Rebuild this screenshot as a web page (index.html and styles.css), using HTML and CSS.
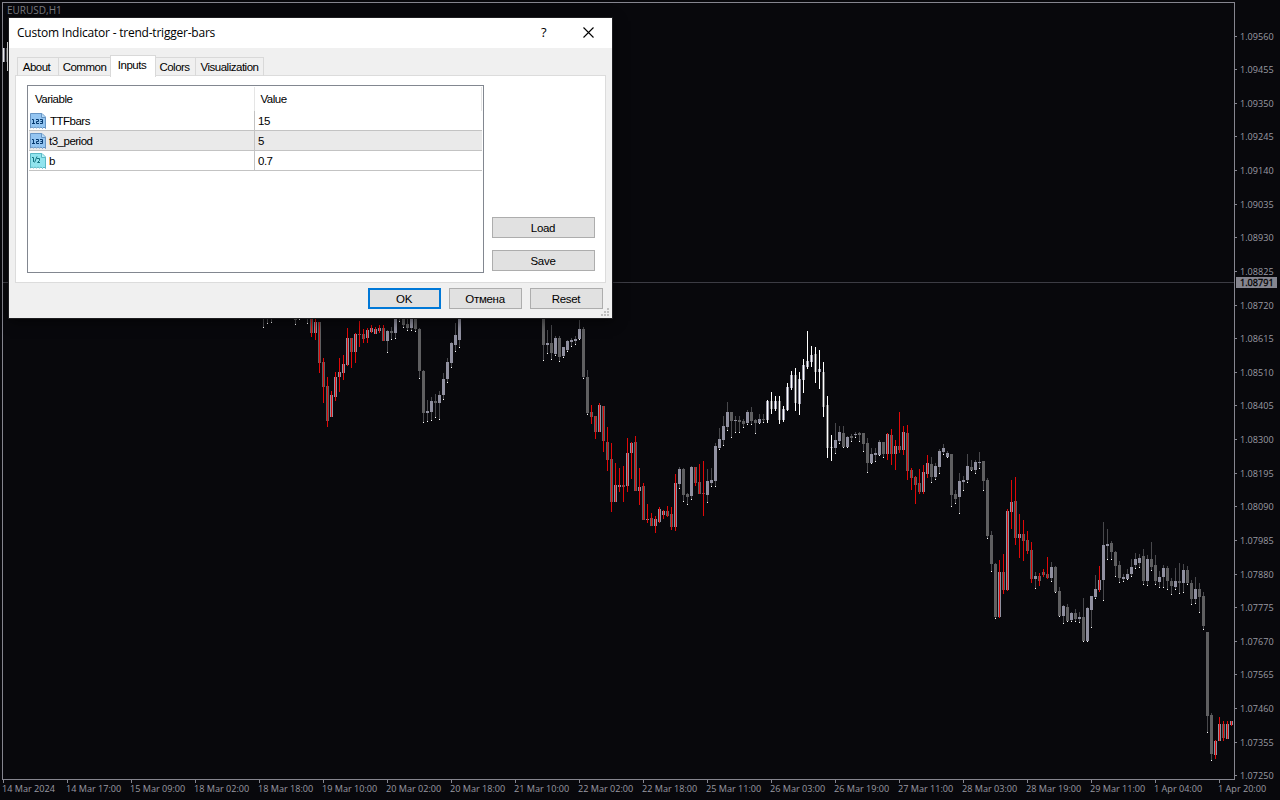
FILE: index.html
```html
<!DOCTYPE html>
<html lang="en">
<head>
<meta charset="UTF-8" />
<meta name="viewport" content="width=device-width, initial-scale=1" />
<title>EURUSD,H1</title>
<link rel="stylesheet" href="styles.css">
</head>
<body>
  <svg id="chart" class="chart" width="1280" height="800" viewBox="0 0 1280 800" shape-rendering="crispEdges">
    <path class="price-line" d="M3 282.5H1234" />
    <g id="candles"></g>
    <path class="frame" d="M2.5 780V2.5H1234.5V779.5H2" />
    <text class="symbol" x="7" y="14">EURUSD,H1</text>
    <g id="axes"></g>
    <rect class="price-box" x="1236" y="277" width="41" height="11" />
    <text class="price-now" x="1240" y="286">1.08791</text>
  </svg>

  <div class="dialog">
    <div class="title-bar">
      <span class="title">Custom Indicator - trend-trigger-bars</span>
      <span class="help">?</span>
      <svg class="close" width="11" height="11" viewBox="0 0 11 11"><path d="M.5 .5l10 10M10.500 .5l-10 10" /></svg>
    </div>

    <div class="tabs">
      <div class="tab about">About</div>
      <div class="tab common">Common</div>
      <div class="tab active">Inputs</div>
      <div class="tab colors">Colors</div>
      <div class="tab visual">Visualization</div>
    </div>

    <div class="panel">
      <div class="list">
        <div class="list-head"><span>Variable</span><span>Value</span></div>
        <div class="row">
          <div class="name first">
            <svg class="icon blue" width="16" height="16" viewBox="0 0 16 16"><path class="sheet" d="M.5 .5H12L15.500 4V15.500L14 14L12.500 15.500L11 14L9.500 15L8 14L6.500 15L5 14L3.500 15L2 14L.5 15Z" /><path class="fold" d="M11.500 .5V4.500H15.500" /><path class="mark" d="M2 6.500H3.500V10.500M2 10.500H5M6 6.500H8.500V8.500H6.500V10.500H9M10 6.500H12.500V10.500H10M10.500 8.500H12.500" /></svg>
            <span>TTFbars</span>
          </div>
          <div class="value">15</div>
        </div>
        <div class="row selected">
          <div class="name">
            <svg class="icon blue" width="16" height="16" viewBox="0 0 16 16"><path class="sheet" d="M.5 .5H12L15.500 4V15.500L14 14L12.500 15.500L11 14L9.500 15L8 14L6.500 15L5 14L3.500 15L2 14L.5 15Z" /><path class="fold" d="M11.500 .5V4.500H15.500" /><path class="mark" d="M2 6.500H3.500V10.500M2 10.500H5M6 6.500H8.500V8.500H6.500V10.500H9M10 6.500H12.500V10.500H10M10.500 8.500H12.500" /></svg>
            <span>t3_period</span>
          </div>
          <div class="value">5</div>
        </div>
        <div class="row">
          <div class="name">
            <svg class="icon cyan" width="16" height="16" viewBox="0 0 16 16"><path class="sheet" d="M.5 .5H12L15.500 4V15.500L14 14L12.500 15.500L11 14L9.500 15L8 14L6.500 15L5 14L3.500 15L2 14L.5 15Z" /><path class="fold" d="M11.500 .5V4.500H15.500" /><path class="mark" d="M2 4.500H3.500V9M4.500 9.500L7 3.500M7 5.500H9.500V7.500L7.500 9.500H10" /></svg>
            <span>b</span>
          </div>
          <div class="value">0.7</div>
        </div>
      </div>
      <div class="side">
        <button>Load</button>
        <button>Save</button>
      </div>
    </div>

    <div class="footer">
      <button class="ok">OK</button>
      <button>Отмена</button>
      <button>Reset</button>
    </div>
    <svg class="grip" width="8" height="8" viewBox="0 0 8 8"><path d="M6 0h2v2H6zM3 3h2v2H3zM6 3h2v2H6zM0 6h2v2H0zM3 6h2v2H3zM6 6h2v2H6z" /></svg>
  </div>

<script src="chart.js"></script>
</body>
</html>
```

FILE: styles.css
```css
body {
  margin: 0;
  background-color: #08080c;
  overflow: hidden;
  font-family: "Open Sans", "Noto Sans", sans-serif;
}
.chart {
  display: block;
  font-size: 9.1px;
}
.chart text {
  fill: #9a9aa3;
}
.frame, .tick {
  fill: none;
  stroke: #85858f;
}
.price-line {
  stroke: #3c3c44;
}
.price-box {
  fill: #85858f;
}
.chart .price-now {
  fill: #000;
  stroke: #000;
  stroke-width: 0.3;
}
.chart .symbol {
  font-size: 10px;
  fill: #7c7c82;
}
.up { fill: #9090a0; }
.down { fill: #5f5f61; }
.wick-g { fill: #48484c; }
.wick-r { fill: #e00808; }
.wick-w, .dot { fill: #fff; }

/* dialog */
.dialog {
  position: absolute;
  left: 9px;
  top: 18px;
  width: 603px;
  height: 300px;
  background-color: #f0f0f0;
  box-shadow: 0 0 0 1px #1d1d20, 1px 3px 12px rgba(0, 0, 0, 0.6);
  font-family: "Liberation Sans", Arial, sans-serif;
  font-size: 11.5px;
  letter-spacing: -0.5px;
  color: #000;
}
.title-bar {
  height: 30px;
  background-color: #fff;
  display: flex;
  align-items: center;
  padding: 0 18px 2px 8px;
  box-sizing: border-box;
  font-family: "Open Sans", "Noto Sans", sans-serif;
}
.title {
  flex: 1;
  font-size: 12px;
  letter-spacing: -0.22px;
}
.help {
  font-size: 13px;
  font-weight: 500;
  margin-right: 37px;
}
.close path {
  fill: none;
  stroke: #000;
  stroke-width: 1.1;
}
.tabs {
  display: flex;
  align-items: flex-end;
  height: 28px;
  padding-left: 8px;
}
.tab {
  box-sizing: border-box;
  height: 19px;
  line-height: 19px;
  border: 1px solid #d9d9d9;
  border-bottom: none;
  text-align: center;
  white-space: nowrap;
}
.about { width: 41px; border-right: none; padding-right: 3px; }
.common { width: 52px; border-right: none; }
.colors { width: 39px; border-left: none; border-right: none; padding-right: 2px; }
.visual { width: 69px; }
.tab.active {
  width: 46px;
  height: 22px;
  background-color: #fff;
  margin-bottom: -1px;
  position: relative;
  padding-right: 2px;
}
.panel {
  box-sizing: border-box;
  width: 591px;
  height: 208px;
  margin: -1px 0 0 6px;
  border: 1px solid #dcdcdc;
  background-color: #fff;
  display: flex;
  padding: 9px 10px 9px 11px;
}
.list {
  box-sizing: border-box;
  width: 457px;
  height: 188px;
  border: 1px solid #828790;
  padding: 1px;
}
.list-head {
  display: flex;
  height: 24px;
  line-height: 25px;
}
.list-head span {
  box-sizing: border-box;
  width: 226px;
  padding-left: 6px;
  border-right: 1px solid #e5e5e5;
}
.list-head span + span {
  width: 228px;
}
.row {
  display: flex;
  height: 19px;
  line-height: 20px;
  border-bottom: 1px solid #c3c3c3;
}
.row.selected {
  background-color: #eaeaea;
}
.name {
  box-sizing: border-box;
  width: 226px;
  border-right: 1px solid #c3c3c3;
  display: flex;
  align-items: center;
  gap: 3px;
  padding-left: 1px;
}
.name.first {
  gap: 4px;
}
.value {
  padding-left: 3px;
}
.icon path {
  stroke-width: 1;
}
.blue .sheet { fill: #94c5f1; stroke: #6795c4; }
.blue .fold { fill: #b5daf8; stroke: #6795c4; }
.blue .mark { fill: none; stroke: #073b70; }
.cyan .sheet { fill: #91e4ee; stroke: #5bb8c5; }
.cyan .fold { fill: #bcf3f7; stroke: #5bb8c5; }
.cyan .mark { fill: none; stroke: #147381; }
.side {
  display: flex;
  flex-direction: column;
  justify-content: flex-end;
  gap: 12px;
  padding: 0 0 2px 8px;
}
button {
  box-sizing: border-box;
  width: 73px;
  height: 21px;
  padding: 1px 1px 0 0;
  border: 1px solid #adadad;
  background-color: #e1e1e1;
  color: #000;
  font: inherit;
  letter-spacing: -0.3px;
  line-height: 18px;
}
.side button {
  width: 103px;
}
button.ok {
  border: 2px solid #0078d7;
  line-height: 16px;
}
.footer {
  display: flex;
  justify-content: flex-end;
  gap: 8px;
  padding: 5px 9px 0 0;
}
.grip {
  position: absolute;
  right: 3px;
  bottom: 2px;
  fill: #bfbfbf;
}
```

FILE: chart.js
```javascript
const ns = 'http://www.w3.org/2000/svg';

// body direction + wick colour, body top, body bottom, high, low (y pixels)
// an empty entry is a bar hidden behind the dialog
const bars = `ug 300 319 300 328;ug 300 310 300 324;ug 300 310 300 323;;;;;;dg 300 320 300 325;ug 300 319 300 320;;ug 300 310 300 324;
dr 310 333 310 337;ur 322 333 318 340;dr 322 363 322 373;dr 362 387 358 403;dr 386 421 377 427;ur 395 417 391 417;ur 377 397 372 401;
ur 372 377 358 392;ur 364 373 355 380;ur 338 365 328 366;dr 338 352 338 368;ur 334 352 333 363;dr 334 335 321 347;dr 334 339 329 343;
ur 330 338 328 343;ur 328 332 325 333;ur 329 334 327 334;ur 328 331 325 333;dr 328 341 325 341;ug 331 341 330 353;dg 331 333 327 340;
ug 310 333 310 339;ug 310 319 310 322;dg 310 325 310 328;dg 324 328 319 331;ug 310 328 310 331;dg 310 329 310 332;dg 329 371 328 379;
dg 371 413 370 423;ug 411 413 400 422;ug 401 412 397 421;dg 401 403 394 418;ug 395 403 391 420;ug 379 395 373 400;ug 362 379 358 383;
ug 343 363 342 368;ug 335 345 323 352;ug 310 340 310 348;;;;;;;;;;;;;;;;;;;;;dg 310 345 310 361;ug 343 345 330 354;
dg 343 353 325 360;ug 338 354 336 356;dg 338 357 336 362;ug 347 356 347 358;ug 341 350 340 352;ug 340 342 338 347;ug 339 341 336 345;
ug 329 339 320 340;dg 329 377 327 379;dg 377 413 370 415;dr 412 417 405 424;dr 416 432 416 439;ur 405 432 403 432;dr 406 441 406 452;
dr 442 460 427 471;dr 459 502 443 512;ur 485 502 463 502;ur 485 487 468 492;dr 485 487 466 502;ur 453 486 438 492;ur 443 453 442 479;
dr 442 491 436 491;ur 487 491 468 505;dr 486 520 483 520;ur 519 520 504 523;dr 518 526 513 526;ur 519 526 516 533;ur 509 522 507 523;
ur 511 515 510 519;dr 511 516 506 517;dr 514 527 507 530;ur 483 527 474 531;ug 469 484 467 489;dg 469 495 468 502;dg 494 497 493 505;
ug 467 496 466 500;dr 467 483 467 486;dr 482 494 464 494;dr 493 494 461 516;ug 481 495 469 503;ug 480 483 468 487;ug 446 481 443 487;
ug 439 448 428 450;ug 426 440 416 446;ug 412 427 402 431;dg 412 421 412 438;ug 420 421 416 433;dg 420 422 416 433;dg 421 424 419 428;
ug 412 423 410 425;dg 412 421 407 425;dg 420 423 419 434;ug 419 423 414 424;dg 419 420 414 423;uw 401 420 400 423;dw 401 409 392 414;
uw 401 409 396 411;dw 401 420 396 424;uw 409 420 406 422;uw 387 410 383 411;uw 375 388 371 390;dw 375 403 368 411;uw 379 404 372 415;
uw 365 380 359 393;uw 361 367 331 369;uw 355 362 346 367;dw 354 372 347 383;uw 369 372 350 389;dw 372 407 362 417;dw 405 448 396 458;
dw 447 448 435 461;ug 440 448 423 454;ug 432 441 426 444;dg 433 447 426 448;ug 437 447 436 448;dg 436 438 434 442;ug 434 435 432 438;
dg 433 435 432 442;dg 433 444 433 452;dg 443 463 438 473;ug 454 463 448 464;ug 453 455 448 462;ug 442 455 440 456;dg 442 454 442 458;
ur 434 454 433 460;dr 435 454 429 465;ur 446 454 440 470;dr 446 450 412 453;ur 432 450 426 455;dr 433 471 425 480;dr 470 478 468 490;
dr 477 485 476 504;dr 483 492 469 494;ur 472 492 465 494;ur 463 474 455 478;dg 464 477 457 483;ug 466 477 463 480;ug 451 467 449 474;
ug 448 452 444 455;ug 453 457 451 458;dg 454 495 454 507;dg 494 499 490 504;ug 481 497 473 514;ug 480 482 476 491;ug 466 480 454 483;
dg 467 470 460 471;ug 462 470 460 474;ug 462 463 452 469;dg 461 481 461 491;dg 480 536 478 539;dg 535 564 531 572;dg 564 617 563 619;
ur 572 617 560 618;dr 572 590 554 594;ur 511 590 509 591;ur 502 512 480 529;dr 501 538 477 545;ur 534 538 514 558;dr 534 541 520 561;
dr 540 551 531 554;dr 550 579 542 583;ug 576 579 572 589;dr 576 581 573 586;dr 572 575 569 577;dr 574 578 557 579;ug 567 578 562 582;
dg 567 592 566 593;dg 591 616 587 617;ug 606 616 605 624;dg 607 621 604 622;ug 613 620 612 622;dg 613 619 609 622;ug 617 619 612 623;
dg 617 641 598 642;ug 608 641 607 642;ug 596 610 596 628;ug 589 597 575 599;ur 580 590 566 592;ug 545 580 522 601;ug 544 546 529 560;
dg 543 552 541 560;dg 552 566 551 577;dg 565 578 561 583;ug 577 579 574 582;ug 574 579 569 580;ug 567 574 559 577;ug 559 565 553 569;
ug 558 563 554 568;dg 556 581 549 585;ug 559 581 555 586;dg 559 567 542 571;dg 565 581 555 585;ug 577 582 571 588;ug 568 577 565 588;
dg 568 581 566 590;dg 581 586 578 595;ug 581 587 568 590;dg 581 583 563 594;ug 570 583 564 593;dg 570 583 566 585;dg 583 599 580 605;
ug 589 599 577 604;dg 589 597 583 613;dg 596 626 592 630;dg 632 716 632 733;dg 715 754 713 761;ur 741 755 740 759;ur 724 741 717 741;
dr 724 738 721 741;ur 724 739 721 739;ur 721 725 721 726`.replace(/\n/g, '').split(';');

const candles = document.getElementById('candles');
const axes = document.getElementById('axes');

function rect(x, y, w, h, cls) {
  const el = document.createElementNS(ns, 'rect');
  el.setAttribute('x', x);
  el.setAttribute('y', y);
  el.setAttribute('width', w);
  el.setAttribute('height', h);
  el.setAttribute('class', cls);
  candles.appendChild(el);
}

function tick(d) {
  const el = document.createElementNS(ns, 'path');
  el.setAttribute('d', d);
  el.setAttribute('class', 'tick');
  axes.appendChild(el);
}

function label(x, y, text) {
  const el = document.createElementNS(ns, 'text');
  el.setAttribute('x', x);
  el.setAttribute('y', y);
  el.textContent = text;
  axes.appendChild(el);
}

bars.forEach((bar, i) => {
  if (!bar) return;
  const [type, ...v] = bar.split(' ');
  const [top, bottom, high, low] = v.map(Number);
  const x = 263 + i * 4;
  const body = () => rect(x - 1, top, 3, bottom - top, type[0] === 'u' ? 'up' : 'down');
  const wick = () => rect(x, high, 1, low - high, 'wick-' + type[1]);
  if (type[1] === 'g') {
    wick();
    body();
    rect(x, low - 1, 1, 1, 'dot');
  } else {
    body();
    wick();
  }
});

// bars at the left edge, partly under the dialog
rect(3, 48, 2, 14, 'up');
rect(3, 48, 1, 14, 'wick-w');
rect(6, 48, 3, 14, 'down');
rect(7, 42, 1, 29, 'wick-w');

// price axis
for (let i = 0; i < 23; i++) {
  const y = Math.floor(36 + i * 33.63);
  tick(`M1235 ${y + 0.5}h2`);
  label(1240, y + 4, (1.0956 - i * 0.00105).toFixed(5));
}

// time axis
['14 Mar 2024', '14 Mar 17:00', '15 Mar 09:00', '18 Mar 02:00', '18 Mar 18:00', '19 Mar 10:00', '20 Mar 02:00',
  '20 Mar 18:00', '21 Mar 10:00', '22 Mar 02:00', '22 Mar 18:00', '25 Mar 11:00', '26 Mar 03:00', '26 Mar 19:00',
  '27 Mar 11:00', '28 Mar 03:00', '28 Mar 19:00', '29 Mar 11:00', '1 Apr 04:00', '1 Apr 20:00'
].forEach((t, i) => {
  tick(`M${i * 64 + 3.5} 780v3`);
  label(i * 64 + 2, 792, t);
});
```
